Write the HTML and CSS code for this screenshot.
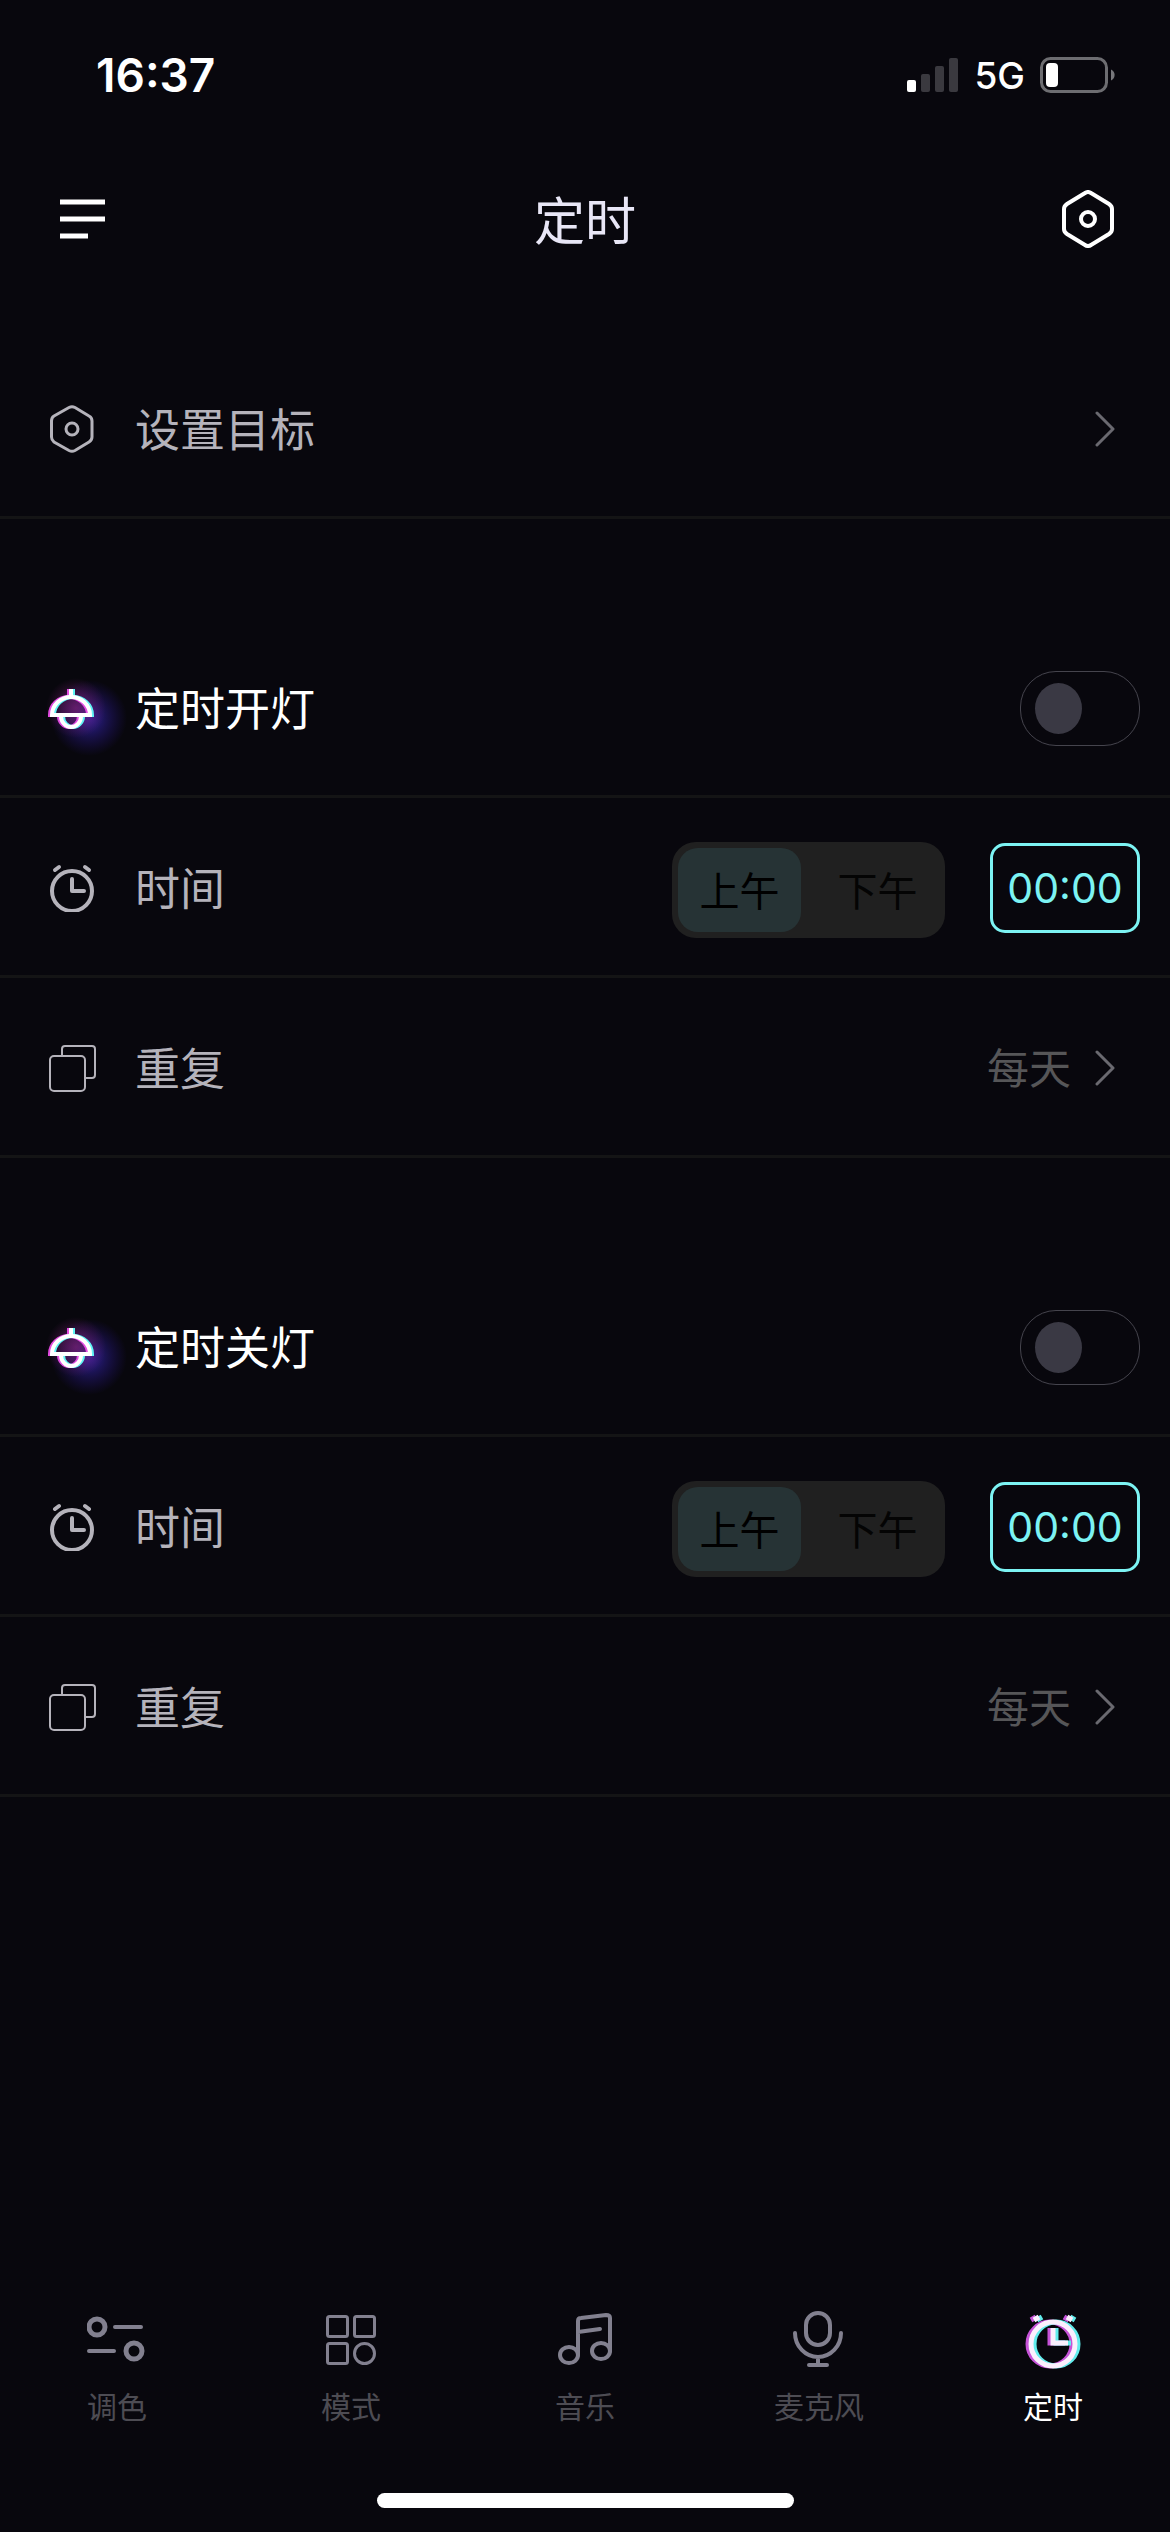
FILE: index.html
```html
<!DOCTYPE html>
<html lang="zh-CN">
<head>
<meta charset="utf-8">
<meta name="viewport" content="width=device-width, initial-scale=1">
<title>定时</title>
<link rel="stylesheet" href="styles.css">
</head>
<body>
<svg class="defs" width="0" height="0" aria-hidden="true">
  <defs>
    <radialGradient id="glow-pink"><stop offset="0" stop-color="#8a2278" stop-opacity=".65"/><stop offset=".5" stop-color="#7a2070" stop-opacity=".4"/><stop offset="1" stop-color="#6a1f68" stop-opacity="0"/></radialGradient>
    <radialGradient id="glow-blue"><stop offset="0" stop-color="#3a26b8" stop-opacity=".85"/><stop offset=".45" stop-color="#3020a0" stop-opacity=".45"/><stop offset="1" stop-color="#2a1490" stop-opacity="0"/></radialGradient>
    <g id="lamp-lines">
      <path d="M23 5V12" stroke-width="4"/>
      <path d="M4 31A19 18 0 0 1 42 31Z" stroke-width="4"/>
      <path d="M13 32A10 11 0 0 0 33 32" stroke-width="4"/>
    </g>
    <symbol id="lamp" viewBox="0 0 48 48" overflow="visible">
      <circle cx="41" cy="34" r="38" fill="url(#glow-blue)"/>
      <circle cx="28" cy="24" r="30" fill="url(#glow-pink)"/>
      <g fill="none">
        <use href="#lamp-lines" x="-2" stroke="#e24be0"/>
        <use href="#lamp-lines" x="2" stroke="#5ff4f4"/>
        <use href="#lamp-lines" stroke="#fff"/>
      </g>
    </symbol>
    <symbol id="clock" viewBox="0 0 48 48">
      <g fill="none" stroke="currentColor" stroke-linecap="round" stroke-linejoin="round">
        <circle cx="24" cy="27" r="20" stroke-width="4"/>
        <path d="M24 15V27H36M7 6L11 3M37 3L41 6" stroke-width="4"/>
      </g>
    </symbol>
    <symbol id="copies" viewBox="0 0 48 48">
      <g fill="none" stroke="currentColor" stroke-width="2">
        <rect x="2" y="12" width="35" height="35" rx="4"/>
        <path d="M14 12V5a3 3 0 0 1 3-3H44a3 3 0 0 1 3 3V31a3 3 0 0 1-3 3H37"/>
      </g>
    </symbol>
    <symbol id="chevron" viewBox="0 0 20 36">
      <path d="M2 2L18 18L2 34" fill="none" stroke="currentColor" stroke-width="3" stroke-linecap="round" stroke-linejoin="round"/>
    </symbol>
    <g id="alarm-lines">
      <circle cx="30" cy="35" r="22"/>
      <path d="M30 19V34H45M11 11L16 8M44 8L49 11"/>
    </g>
  </defs>
</svg>

<div class="status">
  <span class="status-time">16:37</span>
  <div class="status-right">
    <svg class="signal" viewBox="0 0 52 36" aria-hidden="true">
      <rect x="0" y="23" width="9" height="12" rx="2" fill="#fff"/>
      <g fill="#3a393f"><rect x="14" y="17" width="9" height="18" rx="2"/><rect x="28" y="9" width="9" height="26" rx="2"/><rect x="42" y="1" width="9" height="34" rx="2"/></g>
    </svg>
    <span class="network">5G</span>
    <svg class="battery" viewBox="0 0 76 36" aria-hidden="true">
      <rect x="1.5" y="1.5" width="65" height="33" rx="9" fill="none" stroke="#6d6d71" stroke-width="3"/>
      <path d="M71 12.500a6 6 0 0 1 0 11Z" fill="#77777b"/>
      <rect x="6" y="6" width="12" height="24" rx="4" fill="#fff"/>
    </svg>
  </div>
</div>

<header class="header">
  <button class="icon-button" type="button" aria-label="菜单">
    <svg class="menu" viewBox="0 0 45 40"><path d="M0 3H45M0 20H45M0 37H28" stroke="currentColor" stroke-width="5"/></svg>
  </button>
  <h1 class="title">定时</h1>
  <button class="icon-button" type="button" aria-label="设置">
    <svg class="settings" viewBox="0 0 52 58">
      <g fill="none" stroke="currentColor" stroke-width="4">
        <path d="M23 3Q26 1 29 3L47 14Q50 16 50 19V39Q50 42 47 44L29 55Q26 57 23 55L5 44Q2 42 2 39V19Q2 16 5 14Z"/>
        <circle cx="26" cy="29" r="7"/>
      </g>
    </svg>
  </button>
</header>

<main class="groups">
  <section class="group">
    <button class="row" type="button">
      <svg class="row-icon" viewBox="0 0 48 48">
        <g fill="none" stroke="currentColor" stroke-width="3">
          <path d="M21 2.500Q24 1 27 2.500L41 11Q44 12.500 44 16V32Q44 35 41 37L27 45.500Q24 47 21 45.500L6 37Q3.500 35 3.500 32V16Q3.500 12.500 6 11Z"/>
          <circle cx="24" cy="24" r="6"/>
        </g>
      </svg>
      <span class="row-label">设置目标</span>
      <span class="row-end"><svg class="chevron"><use href="#chevron"/></svg></span>
    </button>
  </section>

  <section class="group">
    <div class="row row-head">
      <svg class="row-icon"><use href="#lamp"/></svg>
      <label class="row-label" for="on-switch">定时开灯</label>
      <input class="switch" id="on-switch" type="checkbox" role="switch">
    </div>
    <div class="row">
      <svg class="row-icon"><use href="#clock"/></svg>
      <span class="row-label">时间</span>
      <div class="row-end time-tools">
        <div class="segmented" role="radiogroup" aria-label="开灯时段">
          <label class="segment"><input type="radio" name="on-half" checked>上午</label>
          <label class="segment"><input type="radio" name="on-half">下午</label>
        </div>
        <button class="time" type="button">00:00</button>
      </div>
    </div>
    <button class="row" type="button">
      <svg class="row-icon"><use href="#copies"/></svg>
      <span class="row-label">重复</span>
      <span class="row-end"><span class="value">每天</span><svg class="chevron"><use href="#chevron"/></svg></span>
    </button>
  </section>

  <section class="group">
    <div class="row row-head">
      <svg class="row-icon"><use href="#lamp"/></svg>
      <label class="row-label" for="off-switch">定时关灯</label>
      <input class="switch" id="off-switch" type="checkbox" role="switch">
    </div>
    <div class="row">
      <svg class="row-icon"><use href="#clock"/></svg>
      <span class="row-label">时间</span>
      <div class="row-end time-tools">
        <div class="segmented" role="radiogroup" aria-label="关灯时段">
          <label class="segment"><input type="radio" name="off-half" checked>上午</label>
          <label class="segment"><input type="radio" name="off-half">下午</label>
        </div>
        <button class="time" type="button">00:00</button>
      </div>
    </div>
    <button class="row" type="button">
      <svg class="row-icon"><use href="#copies"/></svg>
      <span class="row-label">重复</span>
      <span class="row-end"><span class="value">每天</span><svg class="chevron"><use href="#chevron"/></svg></span>
    </button>
  </section>
</main>

<nav class="tabs">
  <a class="tab" href="#color">
    <svg class="tab-icon" viewBox="0 0 60 60"><g fill="none" stroke="currentColor" stroke-linecap="round"><path d="M28 18H54M2 42H27" stroke-width="4"/><circle cx="10" cy="18" r="8" stroke-width="5"/><circle cx="47" cy="42" r="8" stroke-width="5"/></g></svg>
    <span>调色</span>
  </a>
  <a class="tab" href="#mode">
    <svg class="tab-icon" viewBox="0 0 60 60"><g fill="none" stroke="currentColor" stroke-width="3"><rect x="6.500" y="7.500" width="20" height="20" rx="2"/><rect x="33.500" y="7.500" width="20" height="20" rx="2"/><rect x="6.500" y="34.500" width="20" height="20" rx="2"/><circle cx="43.500" cy="44.500" r="10"/></g></svg>
    <span>模式</span>
  </a>
  <a class="tab" href="#music">
    <svg class="tab-icon" viewBox="0 0 60 60"><g fill="none" stroke="currentColor" stroke-width="4" stroke-linecap="round"><ellipse cx="14" cy="46" rx="9" ry="8"/><ellipse cx="46" cy="42" rx="9" ry="8"/><path d="M23 46V12Q23 9 26 9L51 6Q55 6 55 9V42M23 23L45 20"/></g></svg>
    <span>音乐</span>
  </a>
  <a class="tab" href="#mic">
    <svg class="tab-icon" viewBox="0 0 60 60"><g fill="none" stroke="currentColor" stroke-width="4" stroke-linecap="round"><rect x="17" y="4" width="24" height="32" rx="12"/><path d="M6 24A23 24 0 0 0 52 24M29 48V56M20 56H38"/></g></svg>
    <span>麦克风</span>
  </a>
  <a class="tab tab-current" href="#timer" aria-current="page">
    <svg class="tab-icon" viewBox="0 0 60 60"><g fill="none" stroke-width="5"><use href="#alarm-lines" x="-3" stroke="#c653d8"/><use href="#alarm-lines" x="3" stroke="#62ecec"/><use href="#alarm-lines" stroke="#fbeffd"/></g></svg>
    <span>定时</span>
  </a>
</nav>
<div class="home-indicator"></div>
</body>
</html>
```

FILE: styles.css
```css
* {
  box-sizing: border-box;
}

body {
  display: flex;
  flex-direction: column;
  min-height: 100vh;
  margin: 0;
  background: #08070d;
  color: #b5b3bb;
  font-family: "Noto Sans CJK SC", sans-serif;
}

button {
  margin: 0;
  padding: 0;
  border: 0;
  background: none;
  color: inherit;
  font: inherit;
  text-align: left;
}

svg {
  display: block;
  flex: none;
}

.defs {
  position: absolute;
}

/* Status bar */
.status {
  display: flex;
  align-items: center;
  justify-content: space-between;
  height: 150px;
  padding: 0 54px 0 96px;
  color: #fff;
  font-family: Inter, sans-serif;
}

.status-time {
  font-size: 46px;
  font-weight: 600;
}

.status-right {
  display: flex;
  align-items: center;
}

.signal {
  width: 52px;
  height: 36px;
}

.network {
  margin: 0 15px;
  font-size: 37px;
  font-weight: 500;
}

.battery {
  width: 76px;
  height: 36px;
}

/* Header */
.header {
  display: grid;
  grid-template-columns: 60px 1fr 60px;
  align-items: center;
  height: 138px;
  padding: 0 52px;
  color: #fff;
}

.icon-button {
  display: flex;
  justify-content: center;
}

.menu {
  width: 45px;
  height: 40px;
}

.settings {
  width: 52px;
  height: 58px;
}

.title {
  margin: 0;
  padding-bottom: 3px;
  color: #e8e6f6;
  font-size: 51px;
  font-weight: 400;
  line-height: 60px;
  text-align: center;
}

/* Setting groups */
.groups {
  display: flex;
  flex: 1;
  flex-direction: column;
  gap: 99px;
  padding: 51px 0;
}

.row {
  display: flex;
  align-items: center;
  width: 100%;
  height: 180px;
  padding: 0 30px 0 48px;
  box-shadow: inset 0 -3px #141415;
  font-size: 45px;
  font-weight: 400;
}

.row-icon {
  width: 48px;
  height: 48px;
  margin-right: 39px;
  overflow: visible;
}

.row-label {
  flex: 1;
  padding-bottom: 3px;
  line-height: 60px;
}

.row-head {
  color: #fff;
}

.row-end {
  display: flex;
  align-items: center;
}

.value {
  margin-right: 24px;
  padding-bottom: 4px;
  color: #565658;
  font-size: 42px;
  line-height: 60px;
}

.chevron {
  width: 20px;
  height: 36px;
  margin-right: 25px;
  color: #6a6970;
}

.switch {
  display: flex;
  align-items: center;
  width: 120px;
  height: 75px;
  margin: 0;
  padding: 0 14px;
  border: 1px solid #45444d;
  border-radius: 36px;
  appearance: none;
}

.switch::before {
  width: 47px;
  height: 51px;
  border-radius: 50%;
  background: #3a3944;
  content: "";
}

.switch:checked {
  justify-content: flex-end;
}

.time-tools {
  gap: 45px;
}

.segmented {
  display: flex;
  gap: 15px;
  margin-top: 4px;
  padding: 6px;
  border-radius: 24px;
  background: #202020;
}

.segment {
  display: flex;
  align-items: center;
  justify-content: center;
  width: 123px;
  height: 84px;
  padding-bottom: 3px;
  border-radius: 20px;
  color: #040404;
  font-size: 40px;
}

.segment:has(:checked) {
  background: #263335;
  color: #000;
}

.segment input {
  width: 0;
  height: 0;
  margin: 0;
  appearance: none;
}

.time {
  width: 150px;
  height: 90px;
  border: 3px solid #7cf3f3;
  border-radius: 15px;
  color: #7cf3f3;
  font-family: Inter, sans-serif;
  font-size: 41px;
  text-align: center;
}

/* Bottom navigation */
.tabs {
  display: grid;
  grid-template-columns: repeat(5, 1fr);
}

.tab {
  display: flex;
  flex-direction: column;
  align-items: center;
  gap: 16px;
  color: #4d4c53;
  font-size: 30px;
  line-height: 40px;
  text-decoration: none;
}

.tab-icon {
  width: 60px;
  height: 60px;
  color: #82808f;
}

.tab-current {
  color: #fff;
}

.home-indicator {
  width: 417px;
  height: 15px;
  margin: 68px auto 24px;
  border-radius: 8px;
  background: #fff;
}
```
